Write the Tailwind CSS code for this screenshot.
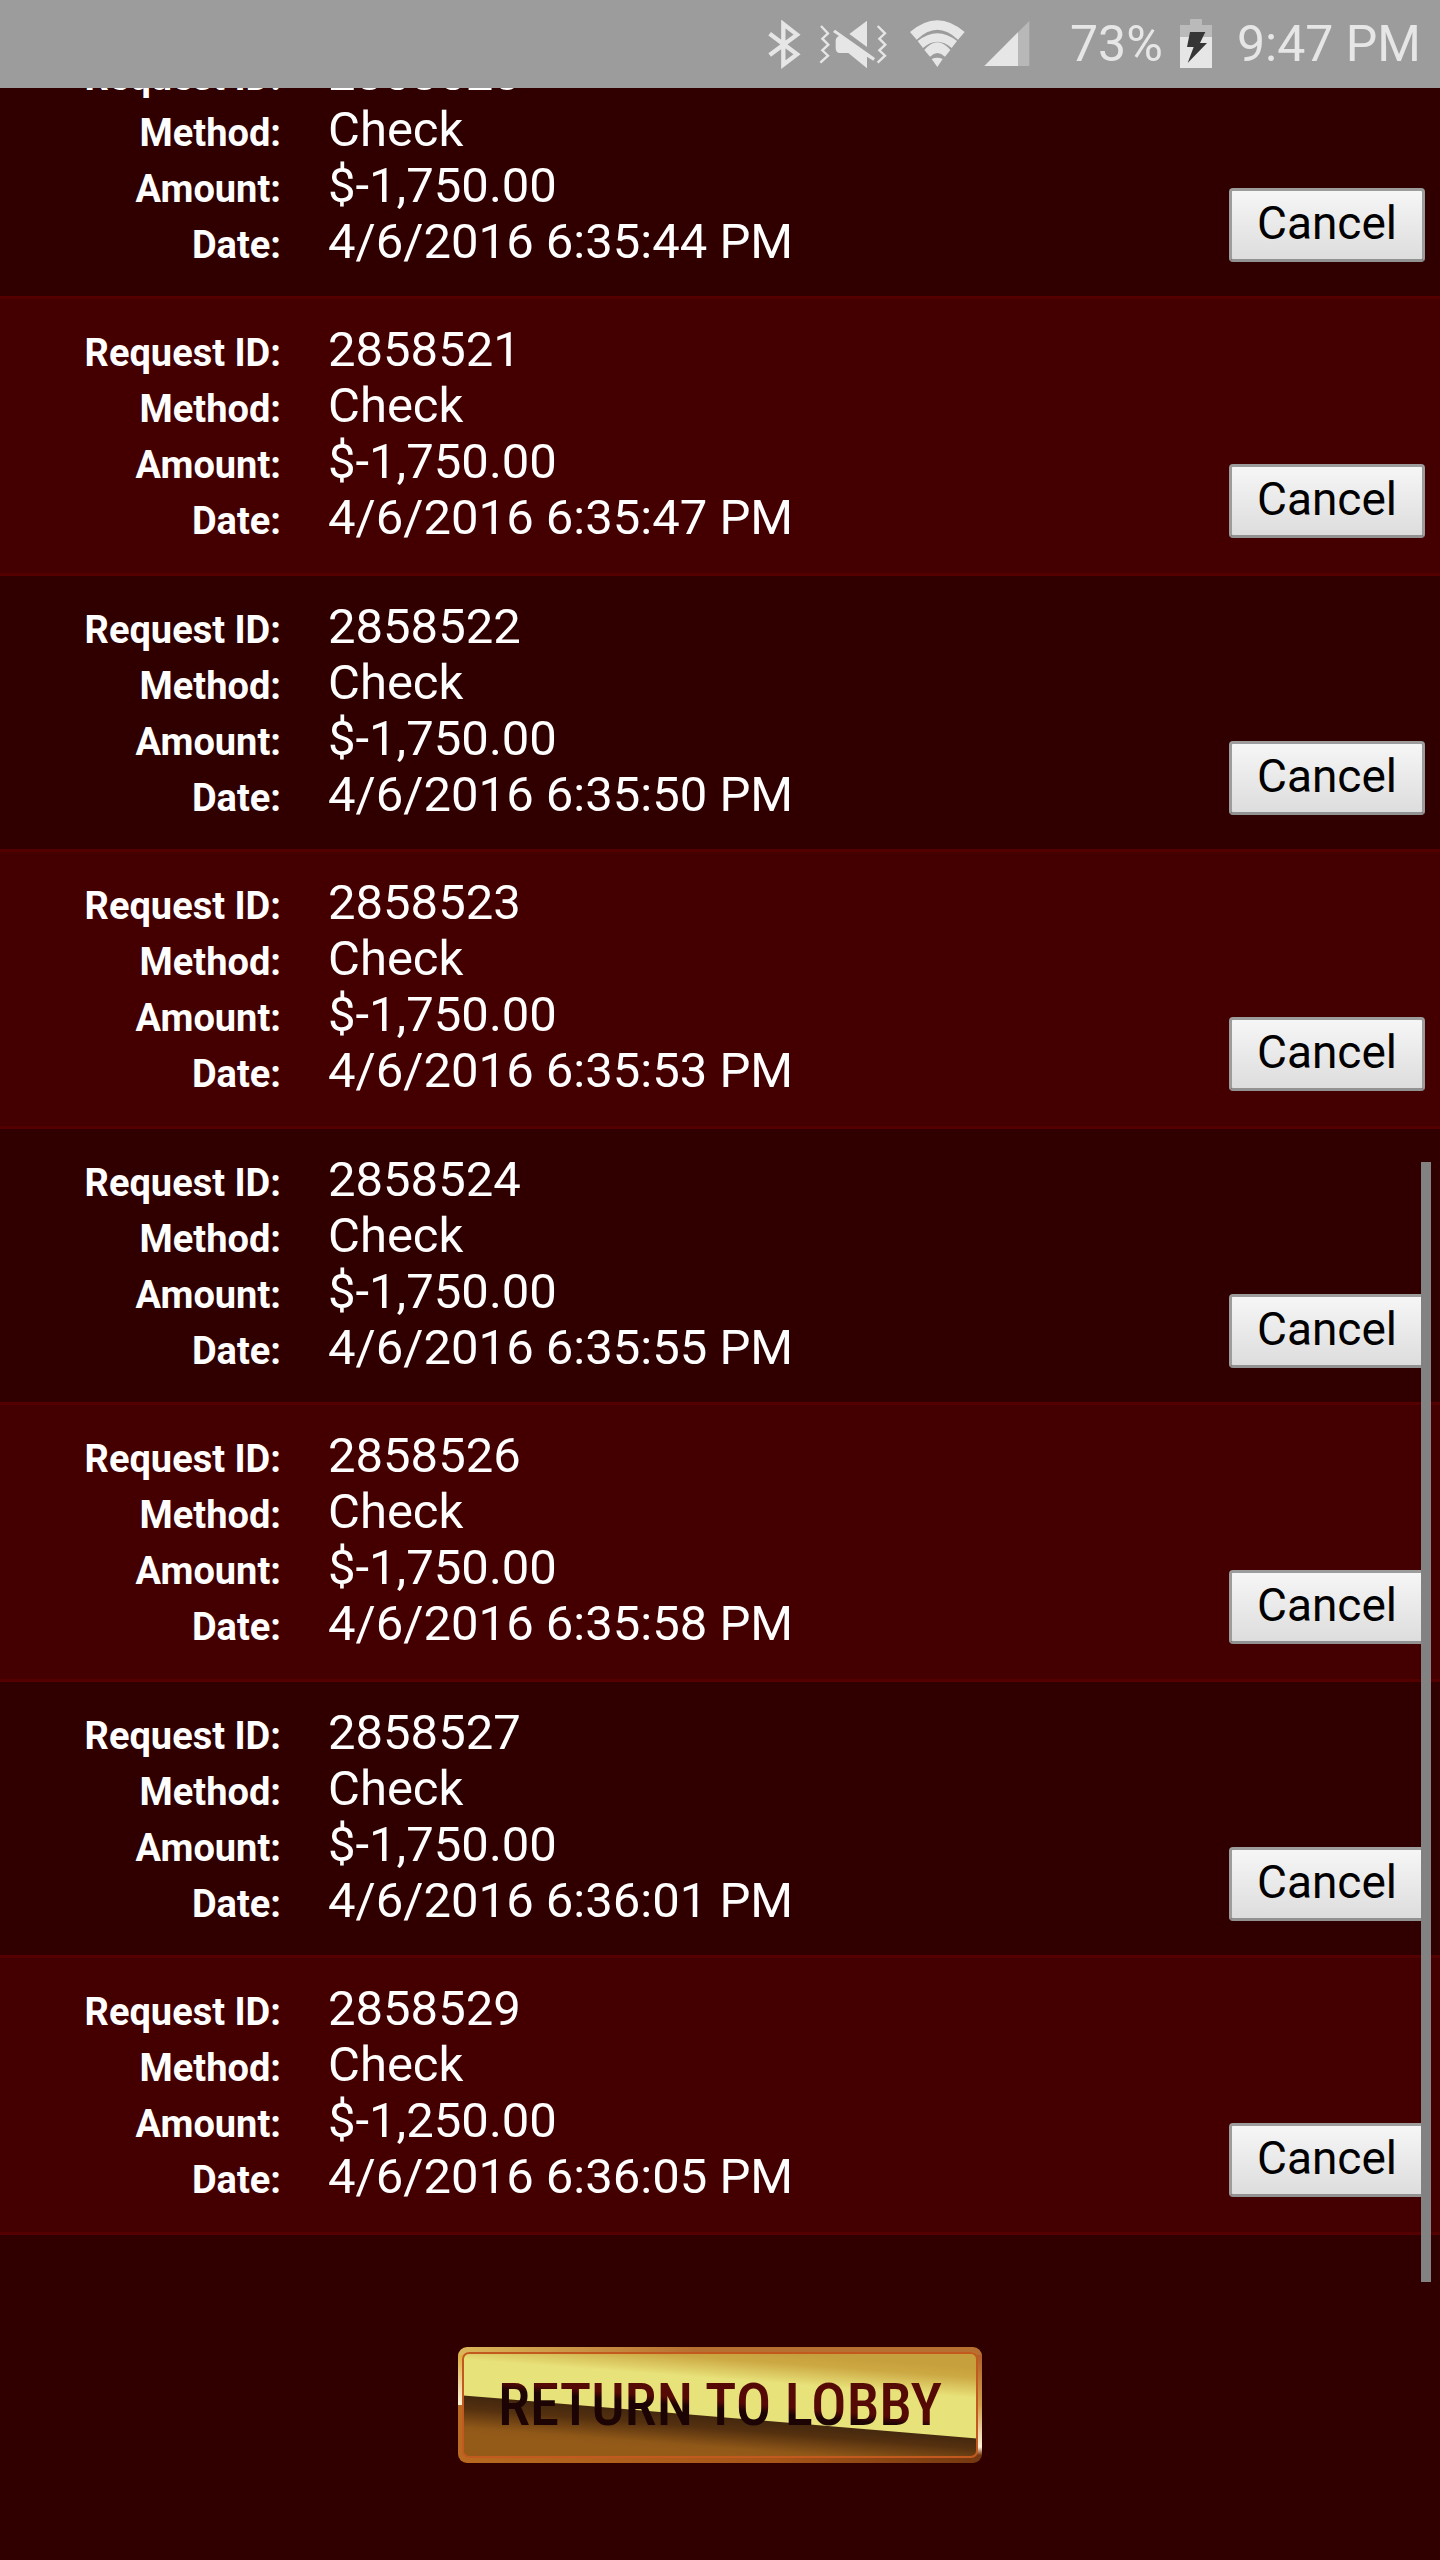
<!DOCTYPE html>
<html lang="en">
<head>
  <meta charset="UTF-8" />
  <meta name="viewport" content="width=device-width, initial-scale=1.0" />
  <title>Pending Withdrawals</title>
  <script src="https://cdn.jsdelivr.net/npm/@tailwindcss/browser@4"></script>
</head>
<body class="bg-[#300000] text-white min-h-screen overflow-x-hidden font-[Roboto,sans-serif]">

  <!-- Status bar -->
  <header class="relative z-10 h-[88px] bg-[#9c9c9c] text-[#e6e6e6] flex items-center justify-end pr-[19px]">
    <svg class="w-[33px] h-[49px]" viewBox="84 57 99 147" fill="none" stroke="currentColor" stroke-width="13" aria-label="Bluetooth">
      <path d="M89 98L171 160L130 191V69L171 101L89 162" stroke-miterlimit="6" />
    </svg>
    <svg class="w-[68px] h-[49px] ml-[18px]" viewBox="237 57 204 147" aria-label="Vibrate">
      <path d="M243 75L264 97L247 113L265 131L247 148L264 164L241 185M413 75L435 97L418 113L436 131L418 148L435 164L413 185" fill="none" stroke="currentColor" stroke-width="7" />
      <path d="M381 59V138L328 99Z" fill="currentColor" />
      <path d="M285 86L405 171L400 179L381 167V202L325 156H300Q287 156 287 140V120Q287 109 297 105L279 93Z" fill="currentColor" />
    </svg>
    <svg class="w-[55px] h-[49px] ml-[23px]" viewBox="510 57 165 147" aria-label="Wi-Fi">
      <g fill="currentColor">
        <path d="M510 93Q592 22 674 93L654 116Q592 56 530 116Z" />
        <path d="M533 120Q592 73 651 120L635 141Q592 103 549 141Z" />
        <path d="M553 147Q592 100 631 147L615 167Q592 145 570 167Z" />
        <path d="M575 174Q592 166 608 174L592 198Z" />
      </g>
    </svg>
    <svg class="w-[46px] h-[49px] ml-[19px]" viewBox="732 57 138 147" aria-label="Signal">
      <path d="M868 60V195H733Z" fill="#b8b8b8" />
      <path d="M834 94V195H733Z" fill="currentColor" />
    </svg>
    <span class="ml-[40px] w-[95px] text-[50px] leading-none">73%</span>
    <svg class="w-[32px] h-[51px] ml-[15px]" viewBox="390 51 96 153" aria-label="Battery charging">
      <path d="M420 51H456V69H486V105H390V69H420Z" fill="#bababa" />
      <path d="M390 105H486V198H390Z" fill="currentColor" />
      <path d="M420 90H466L450 123H471L413 183L431 135H411Z" fill="#363636" />
    </svg>
    <span class="ml-[25px] text-[50px] leading-none">9:47 PM</span>
  </header>

  <!-- Requests, scrolled under the status bar -->
  <main class="relative -mt-[65px]">
    <ul id="requests"></ul>
  </main>

  <div class="flex justify-center pt-[112px] pb-[96px]">
    <a href="#lobby" class="relative w-[524px] h-[116px] flex items-center justify-center">
      <svg class="absolute inset-0 w-full h-full" viewBox="0 0 524 116" preserveAspectRatio="none" aria-hidden="true">
        <defs>
          <linearGradient id="frame" x1="0" y1="0" x2="1" y2="0">
            <stop offset="0" stop-color="#dcb85a" />
            <stop offset=".45" stop-color="#b87030" />
            <stop offset="1" stop-color="#b87030" />
          </linearGradient>
          <linearGradient id="frameLow" x1="0" y1="0" x2="1" y2="0">
            <stop offset="0" stop-color="#b86a20" />
            <stop offset=".6" stop-color="#a85618" />
            <stop offset="1" stop-color="#743810" />
          </linearGradient>
          <linearGradient id="leftEdge" x1="0" y1="0" x2="0" y2="1">
            <stop offset="0" stop-color="#dcb040" />
            <stop offset="1" stop-color="#fff4d8" />
          </linearGradient>
          <linearGradient id="rightEdge" x1="0" y1="0" x2="0" y2="1">
            <stop offset="0" stop-color="#b06028" />
            <stop offset=".5" stop-color="#d0a048" />
            <stop offset=".92" stop-color="#fff0d8" />
            <stop offset="1" stop-color="#743810" />
          </linearGradient>
          <linearGradient id="gold" gradientUnits="userSpaceOnUse" x1="265" y1="2" x2="262" y2="42">
            <stop offset="0" stop-color="#c6a03c" />
            <stop offset=".25" stop-color="#cda944" />
            <stop offset=".75" stop-color="#e8e27a" />
            <stop offset="1" stop-color="#e8e27a" />
          </linearGradient>
          <linearGradient id="bronze" gradientUnits="userSpaceOnUse" x1="262" y1="70" x2="259" y2="108">
            <stop offset="0" stop-color="#44280e" />
            <stop offset=".3" stop-color="#54300f" />
            <stop offset=".8" stop-color="#905818" />
            <stop offset="1" stop-color="#945a18" />
          </linearGradient>
          <clipPath id="outer"><rect width="524" height="116" rx="9" /></clipPath>
          <clipPath id="inner"><rect x="5" y="5" width="514" height="105" rx="6" /></clipPath>
        </defs>
        <g clip-path="url(#outer)">
          <rect width="524" height="58" fill="url(#frame)" />
          <rect y="58" width="524" height="58" fill="url(#frameLow)" />
          <rect y="8" width="6" height="50" fill="url(#leftEdge)" />
          <rect x="518" y="8" width="6" height="100" fill="url(#rightEdge)" />
        </g>
        <g clip-path="url(#inner)">
          <rect width="524" height="116" fill="url(#gold)" />
          <path d="M0 48L524 92V116H0Z" fill="url(#bronze)" />
        </g>
        <rect x="5" y="6" width="514" height="104" rx="6" fill="none" stroke="#c25a20" stroke-width="2" />
      </svg>
      <span class="relative text-[59px] leading-[60px] font-medium font-['Roboto_Condensed',Roboto,sans-serif] text-transparent bg-clip-text bg-[linear-gradient(185deg,#560a06_46%,#1c0404_54%)]">RETURN TO LOBBY</span>
    </a>
  </div>

  <!-- Scroll thumb -->
  <div class="absolute top-[1162px] right-[9px] w-[10px] h-[1120px] bg-[#828282]"></div>

  <script>
    const requests = [
      ['2858520', '$-1,750.00', '4/6/2016 6:35:44 PM'],
      ['2858521', '$-1,750.00', '4/6/2016 6:35:47 PM'],
      ['2858522', '$-1,750.00', '4/6/2016 6:35:50 PM'],
      ['2858523', '$-1,750.00', '4/6/2016 6:35:53 PM'],
      ['2858524', '$-1,750.00', '4/6/2016 6:35:55 PM'],
      ['2858526', '$-1,750.00', '4/6/2016 6:35:58 PM'],
      ['2858527', '$-1,750.00', '4/6/2016 6:36:01 PM'],
      ['2858529', '$-1,250.00', '4/6/2016 6:36:05 PM'],
    ];

    const line = (label, value) => `
      <div class="flex items-baseline gap-[47px]">
        <dt class="w-[281px] text-right text-[38px] leading-[40px] font-bold">${label}:</dt>
        <dd class="text-[49px] leading-[56px]">${value}</dd>
      </div>`;

    document.getElementById('requests').innerHTML = requests.map(([id, amount, date]) => `
      <li class="flex items-end justify-between pt-[23px] pr-[15px] pb-[26px] even:pb-[27px] border-b-3 border-[#550000] even:bg-[#440000]">
        <dl>
          ${line('Request ID', id)}
          ${line('Method', 'Check')}
          ${line('Amount', amount)}
          ${line('Date', date)}
        </dl>
        <button type="button" class="w-[196px] h-[74px] mb-2 pb-1 border-[3px] border-[#9c9c9c] border-b-[#929292] rounded-[4px] bg-linear-to-b from-[#f6f6f6] to-[#dddddd] text-black text-[46px] leading-none">Cancel</button>
      </li>`).join('');
  </script>
</body>
</html>
